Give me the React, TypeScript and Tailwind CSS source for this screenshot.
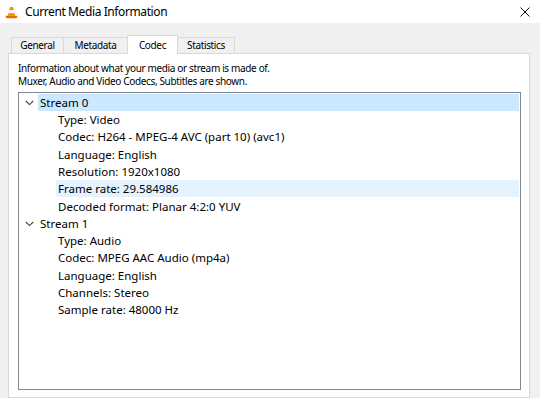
const font = { fontFamily: '"Noto Sans", "Open Sans", sans-serif' }

let VlcIcon = () => (
  <svg width="13" height="13" viewBox="0 0 16 16">
    <path d="M6.4 1.2h3.2l1.2 4H5.2z" fill="#f08a00" />
    <path d="M5.0 5.8h6l0.8 3.2H4.2z" fill="#f7f7f7" />
    <path d="M4.2 9h7.6l1 3H3.2z" fill="#f08a00" />
    <path d="M1.5 12h13c0.6 0 0.9 0.5 0.7 1l-0.5 1.4c-0.2 0.4-0.5 0.6-1 0.6H2.3c-0.5 0-0.8-0.2-1-0.6L0.8 13c-0.2-0.5 0.1-1 0.7-1z" fill="#e27000" />
    <path d="M5.2 5.2h5.6l0.2 0.6H5z" fill="#f7f7f7" />
  </svg>
)

let Chevron = () => (
  <svg width="9" height="6" viewBox="0 0 9 6" className="mt-[1px]">
    <path d="M0.8 1l3.7 3.6L8.2 1" fill="none" stroke="#404040" strokeWidth="1.1" />
  </svg>
)

let Tab = (props: { label: string; active?: boolean; width: string }) => {
  let { label, active, width } = props
  return active ? (
    <div
      className={`${width} h-[19px] -mb-px bg-white border border-b-0 border-[#d9d9d9] flex items-center justify-center text-[10px] tracking-[-0.35px] text-black relative z-10`}
    >
      {label}
    </div>
  ) : (
    <div
      className={`${width} h-[16px] bg-[#f0f0f0] border border-b-0 border-[#d9d9d9] -ml-px first:ml-0 flex items-center justify-center text-[10px] tracking-[-0.35px] text-black`}
    >
      {label}
    </div>
  )
}

let Row = (props: { label: string; level: number; selected?: boolean; hover?: boolean }) => {
  let { label, level, selected, hover } = props
  let bg = selected ? 'bg-[#cce8ff]' : hover ? 'bg-[#e5f3ff]' : ''
  if (level == 0) {
    return (
      <div className="flex items-center h-[17.33px]">
        <div className="w-[19px] flex justify-center pl-[2px]">
          <Chevron />
        </div>
        <div className={`flex-1 h-full flex items-center pl-[2px] ${bg}`}>{label}</div>
      </div>
    )
  }
  return (
    <div className={`flex items-center h-[17.33px] ml-[37px] pl-[2px] ${bg}`}>{label}</div>
  )
}

let streams = [
  {
    name: 'Stream 0',
    items: [
      'Type: Video',
      'Codec: H264 - MPEG-4 AVC (part 10) (avc1)',
      'Language: English',
      'Resolution: 1920x1080',
      'Frame rate: 29.584986',
      'Decoded format: Planar 4:2:0 YUV',
    ],
  },
  {
    name: 'Stream 1',
    items: [
      'Type: Audio',
      'Codec: MPEG AAC Audio (mp4a)',
      'Language: English',
      'Channels: Stereo',
      'Sample rate: 48000 Hz',
    ],
  },
]

export default function App() {
  return (
    <div className="w-[540px] h-[398px] overflow-hidden bg-[#f0f0f0] flex flex-col text-black" style={font}>
      <div className="h-[23px] bg-white flex items-center shrink-0">
        <div className="ml-[5px] mt-[1px]">
          <VlcIcon />
        </div>
        <span className="ml-[7px] text-[12px] tracking-[-0.4px] leading-none">Current Media Information</span>
        <div className="flex-1" />
        <svg width="10" height="10" viewBox="0 0 10 10" className="mr-[10px]">
          <path d="M0.5 0.5l9 9M9.5 0.5l-9 9" stroke="#111" strokeWidth="1" />
        </svg>
      </div>
      <div className="flex items-end h-[30px] pl-[11px] shrink-0">
        <Tab label="General" width="w-[53px]" />
        <Tab label="Metadata" width="w-[65px]" />
        <Tab label="Codec" active width="w-[51px] -ml-px" />
        <Tab label="Statistics" width="w-[58px]" />
      </div>
      <div className="ml-[8px] mr-[10px] flex-1 bg-white border border-[#d9d9d9] flex flex-col pl-[9px] pr-[8px]">
        <div className="pt-[8px] text-[10px] tracking-[-0.35px] leading-[13px]">
          <div>Information about what your media or stream is made of.</div>
          <div>Muxer, Audio and Video Codecs, Subtitles are shown.</div>
        </div>
        <div className="mt-[4px] h-[298px] border border-[#828790] text-[11.5px] pt-[0.5px] pr-[1px]">
          {streams.map((s, i) => (
            <div key={s.name}>
              <Row label={s.name} level={0} selected={i == 0} />
              {s.items.map((it) => (
                <Row key={it} label={it} level={1} hover={it.startsWith('Frame rate')} />
              ))}
            </div>
          ))}
        </div>
      </div>
    </div>
  )
}
